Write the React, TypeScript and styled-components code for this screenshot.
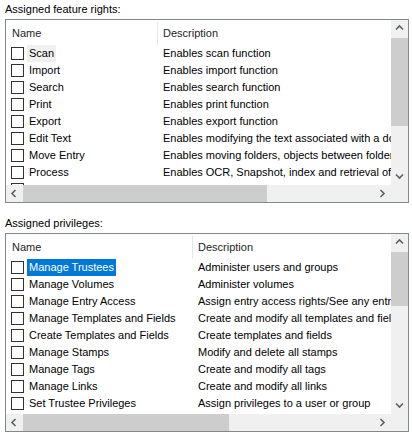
import React from "react";
import styled, { createGlobalStyle } from "styled-components";

const GlobalStyle = createGlobalStyle`
  html, body { margin: 0; padding: 0; background: #ffffff; }
  body { font-family: "Liberation Sans", Arial, sans-serif; font-size: 11px; color: #000; }
`;

const Page = styled.div`
  display: flex;
  flex-direction: column;
  gap: 11px;
  padding: 0 3px 0 5px;
  width: 412px;
  box-sizing: border-box;
`;

const Section = styled.section`
  padding-top: 2px;
  display: flex;
  flex-direction: column;
`;

const Label = styled.div`
  height: 15px;
  line-height: 15px;
  margin-bottom: 2px;
  color: #000;
`;

const ListBox = styled.div<{ $h: number }>`
  height: ${(p) => p.$h}px;
  border: 1px solid #828790;
  box-sizing: border-box;
  display: grid;
  grid-template-columns: 1fr 17px;
  grid-template-rows: 1fr 17px;
  background: #fff;
`;

const Viewport = styled.div`
  overflow: hidden;
  background: #fff;
  min-width: 0;
`;

const Header = styled.div<{ $nameW: number }>`
  display: grid;
  grid-template-columns: ${(p) => p.$nameW}px 1fr;
  height: 25px;
  white-space: nowrap;
`;

const HeaderCell = styled.div<{ $divider?: boolean }>`
  margin-top: 2px;
  height: 23px;
  line-height: 22px;
  padding-left: ${(p) => (p.$divider ? 6 : 5)}px;
  box-sizing: border-box;
  border-right: ${(p) => (p.$divider ? "1px solid #e5e5e5" : "none")};
  color: #1e1e1e;
`;

const Row = styled.div<{ $nameW: number }>`
  display: grid;
  grid-template-columns: ${(p) => p.$nameW}px 1fr;
  height: 17px;
  align-items: center;
  white-space: nowrap;
`;

const NameCell = styled.div`
  display: flex;
  align-items: center;
  gap: 3px;
  padding-left: 5px;
  height: 17px;
  overflow: hidden;
`;

const Check = styled.span`
  width: 13px;
  height: 13px;
  box-sizing: border-box;
  border: 1px solid #333333;
  background: #fff;
  flex: none;
`;

const ItemText = styled.span<{ $sel?: "focus" | "inactive" }>`
  padding: 0 2px;
  height: 17px;
  line-height: 17px;
  background: ${(p) =>
    p.$sel === "focus" ? "#0078d7" : p.$sel === "inactive" ? "#f0f0f0" : "transparent"};
  color: ${(p) => (p.$sel === "focus" ? "#ffffff" : "#000")};
`;

const DescCell = styled.div`
  padding-left: 5px;
  line-height: 17px;
`;

const VScroll = styled.div`
  background: #f0f0f0;
  display: flex;
  flex-direction: column;
`;

const HScroll = styled.div`
  background: #f0f0f0;
  display: flex;
`;

const Corner = styled.div`
  background: #f0f0f0;
`;

const ArrowBtn = styled.div`
  width: 17px;
  height: 17px;
  flex: none;
  display: flex;
  align-items: center;
  justify-content: center;
`;

const VTrack = styled.div`
  flex: 1;
  display: flex;
  flex-direction: column;
`;

const HTrack = styled.div`
  flex: 1;
  display: flex;
`;

const VThumb = styled.div<{ $top: number; $size: number }>`
  margin-top: ${(p) => p.$top}px;
  height: ${(p) => p.$size}px;
  background: #cdcdcd;
`;

const HThumb = styled.div<{ $left: number; $size: number }>`
  margin-left: ${(p) => p.$left}px;
  width: ${(p) => p.$size}px;
  background: #cdcdcd;
`;

type Dir = "up" | "down" | "left" | "right";

const Chevron = ({ dir }: { dir: Dir }) => {
  const pts: Record<Dir, string> = {
    up: "1,5.5 4.5,2 8,5.5",
    down: "1,2.5 4.5,6 8,2.5",
    left: "5.5,1 2,4.5 5.5,8",
    right: "2.5,1 6,4.5 2.5,8",
  };
  return (
    <svg width="9" height="9" viewBox="0 0 9 9">
      <polyline points={pts[dir]} fill="none" stroke="#606060" strokeWidth="1.6" />
    </svg>
  );
};

type Item = { name: string; desc: string; sel?: "focus" | "inactive" };

type ListProps = {
  height: number;
  nameW: number;
  items: Item[];
  vThumb: [number, number];
  hThumb: [number, number];
};

const ListView = ({ height, nameW, items, vThumb, hThumb }: ListProps) => (
  <ListBox $h={height}>
    <Viewport>
      <Header $nameW={nameW}>
        <HeaderCell $divider>Name</HeaderCell>
        <HeaderCell>Description</HeaderCell>
      </Header>
      {items.map((it, i) => (
        <Row key={i} $nameW={nameW}>
          <NameCell>
            <Check />
            <ItemText $sel={it.sel}>{it.name}</ItemText>
          </NameCell>
          <DescCell>{it.desc}</DescCell>
        </Row>
      ))}
    </Viewport>
    <VScroll>
      <ArrowBtn>
        <Chevron dir="up" />
      </ArrowBtn>
      <VTrack>
        <VThumb $top={vThumb[0]} $size={vThumb[1]} />
      </VTrack>
      <ArrowBtn>
        <Chevron dir="down" />
      </ArrowBtn>
    </VScroll>
    <HScroll>
      <ArrowBtn>
        <Chevron dir="left" />
      </ArrowBtn>
      <HTrack>
        <HThumb $left={hThumb[0]} $size={hThumb[1]} />
      </HTrack>
      <ArrowBtn>
        <Chevron dir="right" />
      </ArrowBtn>
    </HScroll>
    <Corner />
  </ListBox>
);

const features: Item[] = [
  { name: "Scan", desc: "Enables scan function", sel: "inactive" },
  { name: "Import", desc: "Enables import function" },
  { name: "Search", desc: "Enables search function" },
  { name: "Print", desc: "Enables print function" },
  { name: "Export", desc: "Enables export function" },
  { name: "Edit Text", desc: "Enables modifying the text associated with a document" },
  { name: "Move Entry", desc: "Enables moving folders, objects between folders" },
  { name: "Process", desc: "Enables OCR, Snapshot, index and retrieval of text" },
  { name: "", desc: "" },
];

const privileges: Item[] = [
  { name: "Manage Trustees", desc: "Administer users and groups", sel: "focus" },
  { name: "Manage Volumes", desc: "Administer volumes" },
  { name: "Manage Entry Access", desc: "Assign entry access rights/See any entry" },
  { name: "Manage Templates and Fields", desc: "Create and modify all templates and fields" },
  { name: "Create Templates and Fields", desc: "Create templates and fields" },
  { name: "Manage Stamps", desc: "Modify and delete all stamps" },
  { name: "Manage Tags", desc: "Create and modify all tags" },
  { name: "Manage Links", desc: "Create and modify all links" },
  { name: "Set Trustee Privileges", desc: "Assign privileges to a user or group" },
  { name: "", desc: "" },
];

export default function App() {
  return (
    <>
      <GlobalStyle />
      <Page>
        <Section>
          <Label>Assigned feature rights:</Label>
          <ListView height={184} nameW={152} items={features} vThumb={[1, 88]} hThumb={[0, 244]} />
        </Section>
        <Section>
          <Label>Assigned privileges:</Label>
          <ListView height={199} nameW={187} items={privileges} vThumb={[1, 54]} hThumb={[0, 206]} />
        </Section>
      </Page>
    </>
  );
}
